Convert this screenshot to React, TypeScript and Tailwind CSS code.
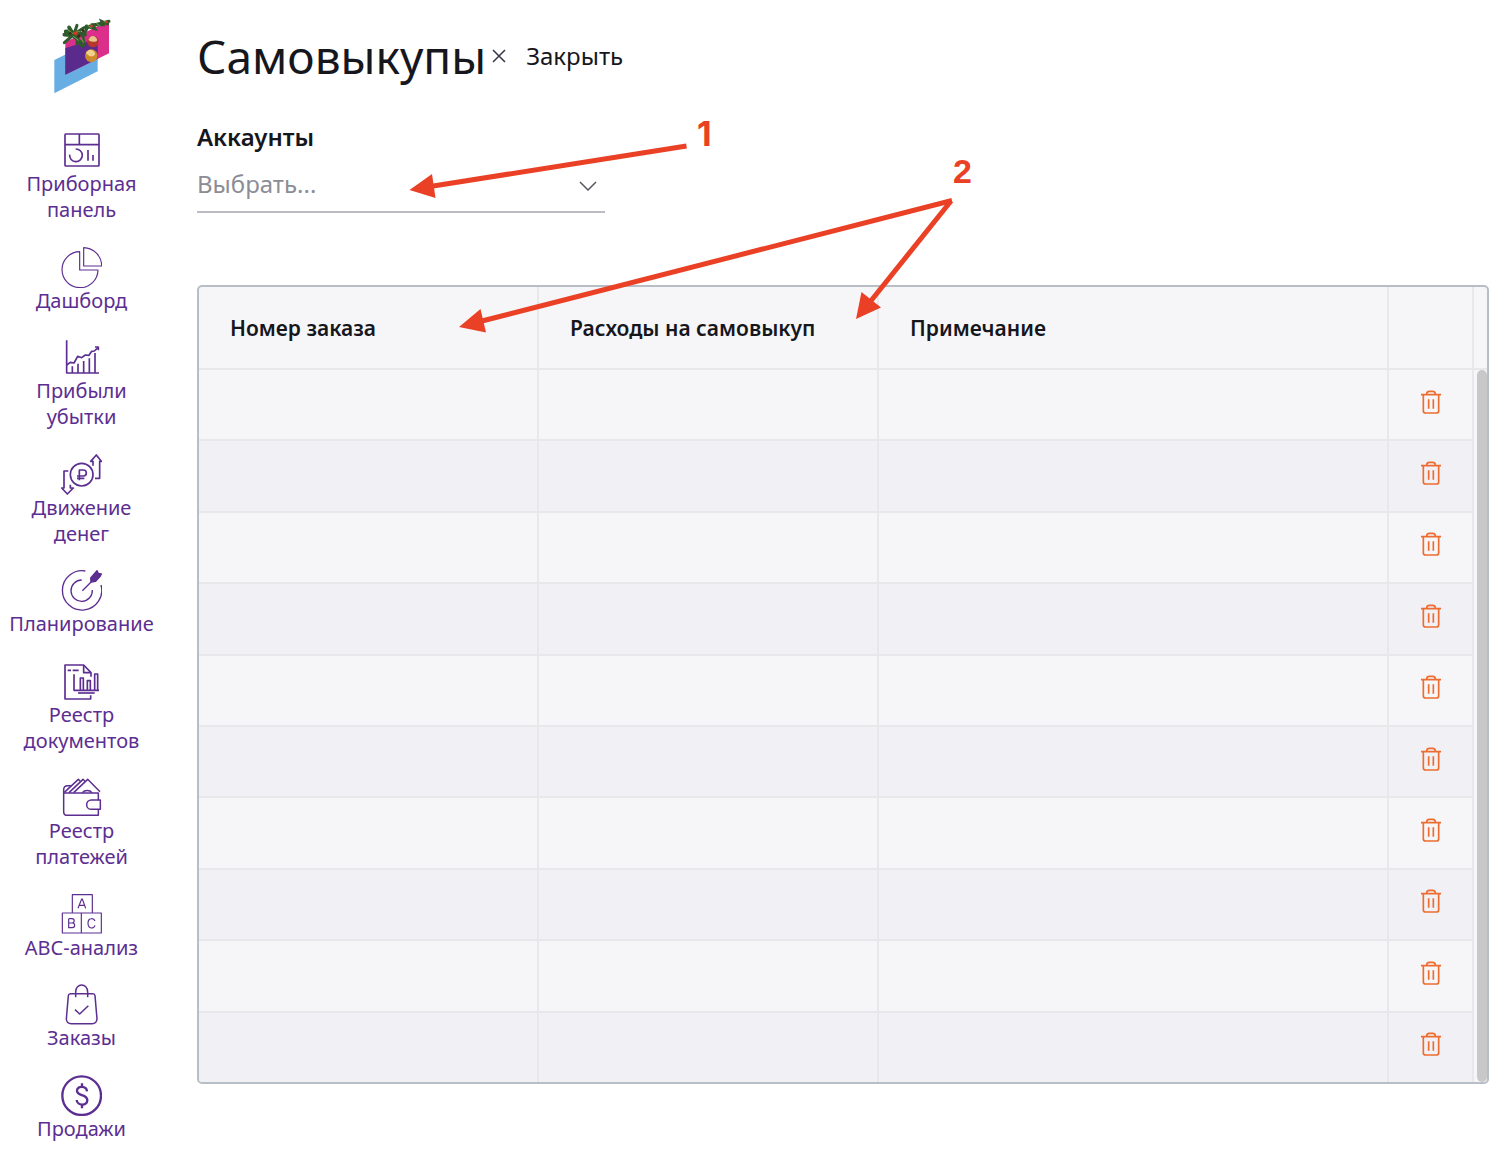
import type { ReactNode } from "react";

const ROWS = [1, 2, 3, 4, 5, 6, 7, 8, 9, 10];

function Icon({ children, width = 4 }: { children: ReactNode; width?: number }) {
  return (
    <svg
      viewBox="0 0 123 123"
      className="size-[41px] shrink-0"
      fill="none"
      stroke="currentColor"
      strokeWidth={width}
      strokeLinejoin="round"
      aria-hidden="true"
    >
      {children}
    </svg>
  );
}

const PanelIcon = (
  <Icon width={5}>
    <rect x="12" y="12" width="102" height="96" rx="2" />
    <path d="M12 44H114M55 12V44" />
    <path d="M44 57a19 19 0 1 1 -18 17" />
    <path d="M81 60V92M96 75V92" />
  </Icon>
);

const PieIcon = (
  <Icon width={3.5}>
    <path d="M56 14A54 54 0 1 0 111 69H56Z" />
    <path d="M68 2V57H122A55 55 0 0 0 68 2Z" />
  </Icon>
);

const ProfitIcon = (
  <Icon width={5}>
    <path d="M17 10V108H114" />
    <path d="M17 84L28 76L39 78L50 58L62 62L73 54L84 55L92 43L100 42L111 32" />
    <path d="M102 30H112V40" />
    <path d="M34 108V88M51 108V80M68 108V72M85 108V64M102 108V48" />
  </Icon>
);

const MoneyIcon = (
  <Icon width={5}>
    <circle cx="62" cy="62" r="34" />
    <path d="M55 79V48H67a9 9 0 0 1 0 18H48M48 73H70" />
    <path d="M22 51H9V102H2L19 120L37 102H28V92" />
    <path d="M102 73H116V22H121L106 3L89 22H96V35" />
  </Icon>
);

const PlanIcon = (
  <Icon width={4}>
    <path d="M73 3A59 59 0 1 0 120 45" />
    <path d="M62 30A32 32 0 1 0 94 60" />
    <path d="M64 62L94 32" />
    <path d="M89 24L108 2L112 10L121 12L117 20L104 34L90 36Z" fill="currentColor" />
  </Icon>
);

const DocumentsIcon = (
  <Icon width={5}>
    <path d="M89 103V114H12V12H68L90 35V47" />
    <path d="M68 13V35H90M20 28H30M35 28H53" />
    <path d="M39 40V88H114" />
    <path d="M58 87V51H67V87M79 87V59H88V87M101 87V39H110V87" />
    <path d="M51 96H101" />
  </Icon>
);

const WalletIcon = (
  <Icon width={4.5}>
    <path d="M112 70V48H8V104Q8 115 19 115H112V98" />
    <path d="M8 48V38Q8 26 20 26H30" />
    <path d="M118 69H91a14 14 0 0 0 0 28H118Z" />
    <path d="M10 46L52 7L57 12M24 47L66 7L71 12M38 47L80 7L117 44" />
    <path d="M64 47A17 13 0 0 1 93 47" />
  </Icon>
);

const AbcIcon = (
  <Icon width={3.5}>
    <path d="M34 57V2H94V57M4 57H121V117H4ZM61 57V117" />
    <path d="M51 43L62 15H64L74 43M55 34H70" />
    <path d="M23 74V101H34a7 7 0 0 0 0 -14H23M23 74H33a6 6 0 0 1 0 13" />
    <path d="M102 81Q99 73 91 74Q81 75 81 88Q81 101 91 102Q100 102 102 94" />
  </Icon>
);

const OrdersIcon = (
  <Icon width={4.5}>
    <path d="M28 29H96Q101 29 102 35L108 105Q107 119 93 119H31Q17 119 16 105L22 35Q23 29 28 29Z" />
    <path d="M44 40V24C44 -4 80 -4 80 24V40" />
    <path d="M42 77L56 90L82 65" />
  </Icon>
);

const SalesIcon = (
  <Icon width={7}>
    <circle cx="62" cy="62" r="58" />
    <path d="M78 49C77 32 48 31 48 47C48 65 79 55 79 76C79 94 48 93 47 75" />
    <path d="M63 25V36M63 88V100" />
  </Icon>
);

const NAV: { lines: string[]; icon: ReactNode }[] = [
  { lines: ["Приборная", "панель"], icon: PanelIcon },
  { lines: ["Дашборд"], icon: PieIcon },
  { lines: ["Прибыли", "убытки"], icon: ProfitIcon },
  { lines: ["Движение", "денег"], icon: MoneyIcon },
  { lines: ["Планирование"], icon: PlanIcon },
  { lines: ["Реестр", "документов"], icon: DocumentsIcon },
  { lines: ["Реестр", "платежей"], icon: WalletIcon },
  { lines: ["ABC-анализ"], icon: AbcIcon },
  { lines: ["Заказы"], icon: OrdersIcon },
  { lines: ["Продажи"], icon: SalesIcon },
];

function Logo() {
  return (
    <svg viewBox="0 0 174 228" className="h-[76px] w-[58px]" role="img" aria-label="Логотип">
      <path d="M4 126L134 62V160L4 226Z" fill="#69aee2" />
      <path d="M37 72L168 8V106L37 170Z" fill="#dc2f8b" />
      <path d="M37 90L134 62V122L37 170Z" fill="#5a2a8c" />
      <g stroke="#2f5a2c" strokeWidth="9" fill="none" strokeLinecap="round">
        <path d="M34 74L64 48L92 30L126 20L168 10" />
        <path d="M38 40L66 44L96 50M48 28L62 50L88 84M34 50L60 52L82 72" strokeWidth="11" />
        <path d="M72 22L64 46L94 46L104 28M74 52L72 78M88 50L94 80M100 24L126 32L120 20L150 20L146 10L164 18" />
      </g>
      <g stroke="#7da04c" strokeWidth="3" fill="none">
        <path d="M42 34L58 46L80 40M60 54L78 68M84 58L92 74M104 22L116 30M130 16L142 24M152 10L162 14" />
      </g>
      <g fill="#3c2b1c">
        <circle cx="78" cy="54" r="5" />
        <circle cx="52" cy="46" r="4" />
        <circle cx="90" cy="38" r="4" />
      </g>
      <g fill="#cf3b22">
        <circle cx="68" cy="46" r="6" />
        <circle cx="116" cy="24" r="4" />
        <circle cx="160" cy="12" r="4" />
      </g>
      <circle cx="120" cy="71" r="17" fill="#b6372b" />
      <path d="M106 66Q112 52 122 54Q134 60 132 68Q120 76 106 66Z" fill="#e8c48d" />
      <circle cx="115" cy="113" r="19" fill="#cf8a2b" />
      <path d="M99 106Q104 94 114 95Q128 100 126 110Q114 122 99 106Z" fill="#efd28e" />
    </svg>
  );
}

function TrashIcon() {
  return (
    <svg viewBox="0 0 60 72" className="mx-auto h-6 w-5" fill="none" stroke="#ed6c2f" strokeWidth="5" aria-hidden="true">
      <path d="M0 14H60M7 14V63Q7 69 13 69H47Q53 69 53 63V14" />
      <path d="M17 12Q17 4 25 4H35Q43 4 43 12M23 28V56M37 28V56" />
    </svg>
  );
}

function Arrows() {
  return (
    <div className="pointer-events-none absolute top-0 left-0 text-[#ea4025]">
      <svg width="1000" height="350" viewBox="0 0 1000 350" fill="currentColor" aria-hidden="true">
        <g stroke="currentColor" strokeWidth="5">
          <path d="M686.5 146L430 186.500" />
          <path d="M952 200.500L480 321.500" fill="none" />
          <path d="M951 201L870 302" />
        </g>
        <path d="M409.500 190L432 174L435.500 198Z" />
        <path d="M459 327L480.500 309L486 332.500Z" />
        <path d="M856 319L861.500 292L881 307.500Z" />
      </svg>
      <span className="absolute top-[117px] left-[697px] font-[Inter] text-[34px] leading-[34px] font-bold">1</span>
      <span className="absolute top-[154px] left-[953px] font-['Liberation_Sans'] text-[34px] leading-[34px] font-bold">2</span>
    </div>
  );
}

export default function App() {
  return (
    <div className="relative flex min-h-screen bg-white font-['Noto_Sans',sans-serif] text-[#16171c]">
      <aside className="flex w-[163px] shrink-0 flex-col items-center pt-[18px] pb-[10px] text-[#5c2e91]">
        <a href="#home">
          <Logo />
        </a>
        <nav className="mt-9 flex flex-1 flex-col items-center justify-between gap-2">
          {NAV.map((item) => (
            <a
              key={item.lines.join(" ")}
              href="#section"
              className="flex flex-col items-center text-center text-[20px] leading-[26px]"
            >
              {item.icon}
              {item.lines.map((line) => (
                <span key={line} className="whitespace-nowrap">
                  {line}
                </span>
              ))}
            </a>
          ))}
        </nav>
      </aside>

      <main className="min-w-0 flex-1 pt-6 pr-[23px] pb-6 pl-[34px]">
        <header className="flex h-16 items-center">
          <h1 className="text-[46px] leading-[64px]">Самовыкупы</h1>
          <button type="button" className="ml-1.5 flex items-center gap-5 text-[24px] leading-8">
            <svg viewBox="0 0 14 14" className="size-[14px]" fill="none" stroke="#343548" strokeWidth="1.500" aria-hidden="true">
              <path d="M1 1L13 13M13 1L1 13" />
            </svg>
            Закрыть
          </button>
        </header>

        <div className="mt-[33px] w-[408px]">
          <label htmlFor="accounts" className="block text-[24px] leading-8 font-semibold">
            Аккаунты
          </label>
          <div className="relative mt-1">
            <select
              id="accounts"
              defaultValue=""
              className="block h-14 w-full appearance-none border-b-2 border-[#bcbcc4] bg-transparent pr-10 text-[24px] leading-8 text-[#8b8d95] outline-none"
            >
              <option value="">Выбрать...</option>
            </select>
            <svg
              viewBox="0 0 18 10"
              className="absolute top-6 right-2 h-[10px] w-[18px]"
              fill="none"
              stroke="#55575f"
              strokeWidth="1.500"
              aria-hidden="true"
            >
              <path d="M1 1L9 9L17 1" />
            </svg>
          </div>
        </div>

        <div className="relative mt-[72px] overflow-hidden rounded-[5px] border-2 border-[#b8bec6] bg-[#f6f6f9]">
          <table className="-mb-0.5 h-[797px] w-full table-fixed border-separate border-spacing-0">
            <colgroup>
              <col className="w-[26.4%]" />
              <col className="w-[26.4%]" />
              <col />
              <col className="w-[85px]" />
              <col className="w-[13px]" />
            </colgroup>
            <thead>
              <tr className="h-[83px] text-left text-[21px] leading-7">
                <th className="border-r-2 border-b-2 border-[#e8e8ea] pl-[31px] font-semibold">Номер заказа</th>
                <th className="border-r-2 border-b-2 border-[#e8e8ea] pl-[31px] font-semibold">Расходы на самовыкуп</th>
                <th className="border-r-2 border-b-2 border-[#e8e8ea] pl-[31px] font-semibold">Примечание</th>
                <th className="border-r-2 border-b-2 border-[#e8e8ea]" />
                <th className="border-b-2 border-[#e8e8ea]" />
              </tr>
            </thead>
            <tbody>
              {ROWS.map((row) => (
                <tr key={row} className="group">
                  <td className="border-r-2 border-b-2 border-[#e8e8ea] group-even:bg-[#f0f0f5]" />
                  <td className="border-r-2 border-b-2 border-[#e8e8ea] group-even:bg-[#f0f0f5]" />
                  <td className="border-r-2 border-b-2 border-[#e8e8ea] group-even:bg-[#f0f0f5]" />
                  <td className="border-r-2 border-b-2 border-[#e8e8ea] p-0 pb-[6px] group-even:bg-[#f0f0f5]">
                    <button type="button" aria-label="Удалить строку" className="mx-auto block">
                      <TrashIcon />
                    </button>
                  </td>
                  <td />
                </tr>
              ))}
            </tbody>
          </table>
          <div className="absolute top-[83px] right-0 bottom-0 w-[10px] rounded-full bg-[#c8c8c8]" />
        </div>
      </main>
      <Arrows />
    </div>
  );
}
